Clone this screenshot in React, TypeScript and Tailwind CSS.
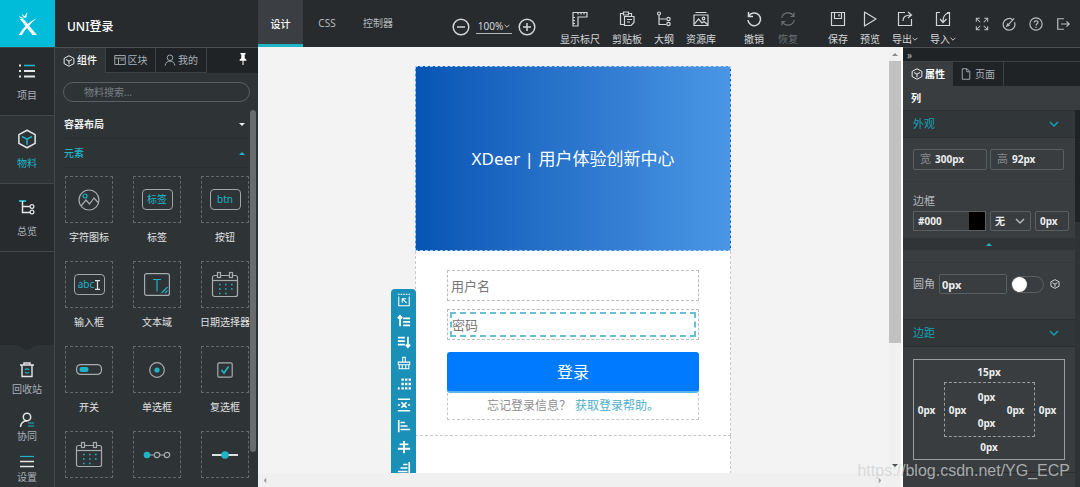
import type { ReactNode } from "react";

const CYAN = "#1fb3c6";

type SvgProps = { children: ReactNode; className?: string; box?: string };

function Svg({ children, className = "w-4 h-4", box = "0 0 16 16" }: SvgProps) {
  return (
    <svg viewBox={box} className={`shrink-0 ${className}`} fill="none" stroke="currentColor" strokeWidth="1.2" aria-hidden="true">
      {children}
    </svg>
  );
}

function CubeIcon({ className, accent = "currentColor" }: { className?: string; accent?: string }) {
  return (
    <Svg className={className}>
      <path d="M8 1 14.5 4.5v7L8 15 1.5 11.5v-7z" strokeLinejoin="round" />
      <path d="M4 6l4 2.2L12 6M8 8.2v4.3" stroke={accent} />
    </Svg>
  );
}

function Chevron({ className = "w-2 h-2" }: { className?: string }) {
  return (
    <Svg className={className} box="0 0 10 10">
      <path d="M1 3l4 4 4-4" strokeWidth="1.5" />
    </Svg>
  );
}

function Triangle({ className, up = false }: { className?: string; up?: boolean }) {
  return (
    <svg viewBox="0 0 8 4" className={`shrink-0 ${className}`} fill="currentColor" aria-hidden="true">
      <path d={up ? "M0 4 4 0l4 4z" : "M0 0h8L4 4z"} />
    </svg>
  );
}

function CalendarIcon() {
  return (
    <Svg className="w-7 h-7" box="0 0 28 28">
      <rect x="1.5" y="4.5" width="25" height="21" rx="2" />
      <path d="M1.5 9.5h25" />
      <rect x="6.5" y="1.5" width="3" height="5" fill="#2e3336" />
      <rect x="18.5" y="1.5" width="3" height="5" fill="#2e3336" />
      <path d="M8 13.5h14M8 18h14M8 22.5h9" stroke={CYAN} strokeWidth="1.6" strokeDasharray="1.6 4.4" />
    </Svg>
  );
}

const railTop = [
  {
    label: "项目",
    active: false,
    icon: (
      <Svg className="w-4 h-4">
        <path d="M5 2.5h11" stroke={CYAN} strokeWidth="1.6" />
        <path d="M5 8h11M5 13.5h11M0 2.5h2M0 8h2M0 13.5h2" strokeWidth="1.8" />
      </Svg>
    ),
  },
  { label: "物料", active: true, icon: <CubeIcon className="w-5 h-5" accent={CYAN} /> },
  {
    label: "总览",
    active: false,
    icon: (
      <Svg className="w-4 h-4">
        <path d="M0 2h7" stroke={CYAN} strokeWidth="2" />
        <path d="M3.5 2v11.5H11M3.5 7.5H11" strokeWidth="1.5" />
        <circle cx="13" cy="7.5" r="1.9" />
        <circle cx="13" cy="13" r="1.9" />
      </Svg>
    ),
  },
];

const railBottom = [
  {
    label: "回收站",
    size: "h-[50px] gap-[3px]",
    icon: (
      <Svg className="w-4 h-4">
        <path d="M1 3h14M5 3V1h6v2M3 3v11.5h10V3" strokeWidth="1.4" />
        <path d="M6 8a2.3 2.3 0 0 1 4 0M10 10a2.3 2.3 0 0 1-4 0" stroke={CYAN} />
      </Svg>
    ),
  },
  {
    label: "协同",
    size: "h-[41px]",
    icon: (
      <Svg className="w-4 h-4">
        <circle cx="8" cy="5" r="3.7" strokeWidth="1.5" />
        <path d="M1.5 15c.3-3.5 2.5-6 6.5-6.2" strokeWidth="1.5" />
        <path d="M9 11h6M9 14h6" stroke={CYAN} />
      </Svg>
    ),
  },
  {
    label: "设置",
    size: "h-9",
    icon: (
      <Svg className="w-4 h-4">
        <path d="M1 3.5h14" stroke={CYAN} />
        <path d="M1 8.5h14M1 13.5h14" strokeWidth="1.5" />
      </Svg>
    ),
  },
];

function Framed({ children, className }: { children: ReactNode; className: string }) {
  return (
    <span className={`flex h-[21px] items-center justify-center rounded-sm border border-[#a3a6a8] text-[#1fb3c6] ${className}`}>
      {children}
    </span>
  );
}

const elements = [
  {
    label: "字符图标",
    icon: (
      <Svg className="w-[22px] h-[22px]" box="0 0 22 22">
        <circle cx="11" cy="11" r="10" />
        <path d="M3 17l5-6 3.5 4 4.5-6 4.5 5" />
        <circle cx="7" cy="7" r="2" stroke={CYAN} />
      </Svg>
    ),
  },
  { label: "标签", icon: <Framed className="w-[31px] text-[10px]">标签</Framed> },
  { label: "按钮", icon: <Framed className="w-[31px] text-[10px]">btn</Framed> },
  {
    label: "输入框",
    icon: (
      <Framed className="w-[31px] text-[10px]">
        abc
        <Svg className="ml-px w-[5px] h-2.5 text-[#dfe2e3]" box="0 0 5 10">
          <path d="M0 .6h5M0 9.4h5M2.500 0v10" />
        </Svg>
      </Framed>
    ),
  },
  {
    label: "文本域",
    icon: (
      <Svg className="w-[26px] h-[23px]" box="0 0 26 23">
        <rect x=".6" y=".6" width="24.8" height="21.8" rx="2" />
        <path d="M9 6.500h8M13 6.500v12M17.500 20l6-6M21 20l2.500-2.500" stroke={CYAN} />
      </Svg>
    ),
  },
  { label: "日期选择器", icon: <CalendarIcon /> },
  {
    label: "开关",
    icon: (
      <Svg className="w-[26px] h-[11px]" box="0 0 26 11">
        <rect x=".6" y=".6" width="24.8" height="9.8" rx="4" />
        <rect x="3.500" y="3" width="9" height="5" rx="2" fill={CYAN} stroke="none" />
      </Svg>
    ),
  },
  {
    label: "单选框",
    icon: (
      <Svg className="w-4 h-4">
        <circle cx="8" cy="8" r="7.3" />
        <circle cx="8" cy="8" r="2.6" fill={CYAN} stroke="none" />
      </Svg>
    ),
  },
  {
    label: "复选框",
    icon: (
      <Svg className="w-4 h-4">
        <rect x=".8" y=".8" width="14.4" height="14.4" rx="1.5" />
        <path d="M4.500 8l2.500 3 4.500-6.500" stroke={CYAN} strokeWidth="1.7" />
      </Svg>
    ),
  },
];

// icon-only tiles at the end of the list
const moreElements = [
  { label: "日历", icon: <CalendarIcon /> },
  {
    label: "步骤条",
    icon: (
      <Svg className="w-7 h-2" box="0 0 28 8">
        <path d="M6 4h5M17 4h4" />
        <circle cx="4" cy="4" r="3.3" fill={CYAN} stroke="none" />
        <circle cx="14" cy="4" r="2.7" />
        <circle cx="24" cy="4" r="2.7" />
      </Svg>
    ),
  },
  {
    label: "滑块",
    icon: (
      <Svg className="w-[26px] h-2" box="0 0 26 8">
        <path d="M0 4h26" stroke="#fff" strokeWidth="1.7" />
        <circle cx="13" cy="4" r="3.8" fill={CYAN} stroke="none" />
      </Svg>
    ),
  },
];

const viewTools = [
  {
    label: "显示标尺",
    icon: <path d="M1 1.5h14v4.5H6V15H1zM6 1.5v2M9 1.5v2M12 1.5v2M1 6.5h2M1 9.5h2M1 12.5h2" />,
  },
  {
    label: "剪贴板",
    icon: (
      <>
        <path d="M5.500 13.500h-4v-11h3M9.500 2.500h3v3" />
        <path d="M4.500 1h5v3h-5z" />
        <path d="M5.500 5.500h9.500v6l-3 3H5.500zM8 8.500h5M8 11h3" />
      </>
    ),
  },
  {
    label: "大纲",
    icon: (
      <>
        <path d="M3 4v9.500h7M3 8h7" />
        <circle cx="3" cy="2.500" r="1.500" />
        <circle cx="12.500" cy="8" r="1.700" />
        <circle cx="12.500" cy="13" r="1.700" />
      </>
    ),
  },
  {
    label: "资源库",
    icon: (
      <>
        <path d="M2.500 1.500h11M1 4h14v10.500H1zM1.500 13l4-5 3.500 4 2-1.500 3.500 3" />
        <circle cx="10.500" cy="7.500" r="1.300" />
      </>
    ),
  },
];

const historyTools = [
  { label: "撤销", muted: false, icon: <path d="M2.500 1v4.500H7M2.700 5.200A6.300 6.300 0 1 1 1.900 9" strokeWidth="1.500" /> },
  {
    label: "恢复",
    muted: true,
    icon: <path d="M1.700 7A6.400 6.400 0 0 1 13.500 5M14.300 9A6.400 6.400 0 0 1 2.500 11M14 1.500V5.500H10.500M2 14.500v-4h3.500" />,
  },
];

const fileTools = [
  { label: "保存", menu: false, icon: <path d="M1.500 1.500h13v13h-13zM4.500 1.500v6h7v-6M9 3v2.500" /> },
  { label: "预览", menu: false, icon: <path d="M2.500 1 14 8 2.500 15z" strokeLinejoin="round" /> },
  { label: "导出", menu: true, icon: <path d="M8 1.500H1.500v13h13V8M6 10c0-4 2-6 8-6M11 1l3.500 3L11 7" /> },
  { label: "导入", menu: true, icon: <path d="M5 1.500H1.500v13h13v-13H12M14 2C9.500 2.500 8 5 8 10.500M5 8l3 3.500L11.500 8" /> },
];

const headerIcons = [
  {
    label: "全屏",
    icon: <path d="M1.500 5.500v-4h4M10.500 1.500h4v4M14.500 10.500v4h-4M5.500 14.500h-4v-4M2 2l4 4M14 2l-4 4M14 14l-4-4M2 14l4-4" />,
  },
  { label: "主题", icon: <path d="M12 3A6.700 6.700 0 1 0 14.300 6M7 9l7-7.500M5.500 10.500l1-2.500 1.500 1.500z" strokeWidth="1.400" /> },
  {
    label: "帮助",
    icon: (
      <>
        <circle cx="8" cy="8" r="7" strokeWidth="1.400" />
        <path d="M5.800 6.300C6 3.500 10.500 3.800 10.200 6.300 10 7.700 8 7.700 8 9.800M8 11v1.500" strokeWidth="1.400" />
      </>
    ),
  },
  { label: "退出", icon: <path d="M9 2H2v12h7M6 8h9M12 5l3 3-3 3" strokeWidth="1.400" /> },
];

const canvasTools = [
  {
    label: "选择父级",
    icon: (
      <>
        <path d="M2 4v10.500h12V4" />
        <path d="M1 1.500h14" strokeDasharray="2 1" />
        <path d="M6 11V6.500h4.500M6 6.500l5 5" />
      </>
    ),
  },
  { label: "前插", icon: <path d="M3.500 14V2M1 5l2.500-3L6 5M7 5h8M7 9h8M7 13h8" strokeWidth="2" /> },
  { label: "后插", icon: <path d="M12.500 2v12M10 11l2.500 3 2.500-3M1 3h8M1 7h8M1 11h8" strokeWidth="2" /> },
  { label: "清空", icon: <path d="M6.500 7V1.500h3V7M1.500 7h13v3h-13zM2.500 10v4.500h11V10M6 10v4.500M10 10v4.500" /> },
  { label: "网格", icon: <path d="M5 3h11M5 8h11M5 13h11M1 13h2" strokeWidth="2.600" strokeDasharray="2.800 1.300" /> },
  { label: "删除", icon: <path d="M1 1.500h14M1 14.500h14M5 5l6 6M11 5l-6 6M1 8h2.500M12.500 8H15" strokeWidth="1.700" /> },
  { label: "左对齐", icon: <path d="M2 1v14M4 4h5M4 8h8M4 12h11" strokeWidth="1.900" /> },
  { label: "居中对齐", icon: <path d="M8 1v14M3 5h10M1 10h14" strokeWidth="2.200" /> },
  { label: "右对齐", icon: <path d="M14 1v14M7 4h5M4 8h8M1 12h11" strokeWidth="1.900" /> },
];

function ToolButton({ label, icon, menu = false, muted = false }: { label: string; icon: ReactNode; menu?: boolean; muted?: boolean }) {
  return (
    <button type="button" className={`flex flex-col items-center gap-1 whitespace-nowrap ${muted ? "text-[#6c7073]" : "text-[#d3d6d8]"}`}>
      <Svg className="w-4 h-4">{icon}</Svg>
      <span className="flex items-center leading-4">
        {label}
        {menu && <Chevron className="w-1.5 h-1.5" />}
      </span>
    </button>
  );
}

function Header() {
  return (
    <header className="flex h-[47px] shrink-0 bg-[#272b2e]">
      <a href="#" aria-label="XDeer" className="flex w-[55px] shrink-0 items-center justify-center bg-[#00bcd9]">
        <svg viewBox="0 0 20 24" className="h-6 w-5 text-white" fill="currentColor" aria-hidden="true">
          <path d="M2 7c2-.4 3.600 0 4.800 1.500L19 23h-4.500z" />
          <path d="M18.500 6.500C11.500 9 5 16 .8 23h3C7.500 17 12.500 11.500 18.500 6.500z" />
          <path d="M4 1c.2 1.600 1 2.300 2.800 3.200C7 2.700 8 1.500 9.500.5 8.700 2.500 8.600 3.800 8.300 5.800 5.500 5.800 3.800 4 4 1zM.8 3.500c1.500 1.500 3.700 2.500 6.200 2.200C4.800 7.300 1.500 6.500.8 3.500z" />
        </svg>
      </a>
      <h1 className="flex w-[203px] shrink-0 items-center pl-3 pt-1.5 text-xs font-medium text-white">UNI登录</h1>
      <nav className="flex shrink-0 text-[#b4b8bb]">
        <a href="#design" className="flex w-[45px] items-center justify-center border-b-3 border-[#1fb3c6] bg-[#3b3f43] pt-1 font-medium text-white">设计</a>
        <a href="#css" className="flex w-12 items-center justify-center">CSS</a>
        <a href="#controller" className="flex w-[54px] items-center justify-center">控制器</a>
      </nav>
      <div className="ml-[47px] flex shrink-0 items-center gap-1.5 pt-1.5 text-[#d3d6d8]">
        <button type="button" aria-label="缩小">
          <Svg className="w-[18px] h-[18px]" box="0 0 18 18">
            <circle cx="9" cy="9" r="7.8" strokeWidth="1.5" />
            <path d="M5 9h8" strokeWidth="1.5" />
          </Svg>
        </button>
        <button type="button" className="flex w-9 items-center justify-center gap-px border-b border-[#b4b8bb] text-[10px] leading-[14px]">
          100%
          <Chevron className="w-1.5 h-1.5" />
        </button>
        <button type="button" aria-label="放大">
          <Svg className="w-[18px] h-[18px]" box="0 0 18 18">
            <circle cx="9" cy="9" r="7.8" strokeWidth="1.5" />
            <path d="M5 9h8M9 5v8" strokeWidth="1.5" />
          </Svg>
        </button>
      </div>
      <div className="ml-6 flex shrink-0 gap-3 pt-[11px]">
        {viewTools.map((tool) => (
          <ToolButton key={tool.label} {...tool} />
        ))}
      </div>
      <div className="ml-auto flex shrink-0 gap-3.5 pt-[11px]">
        {historyTools.map((tool) => (
          <ToolButton key={tool.label} {...tool} />
        ))}
      </div>
      <div className="ml-[30px] flex shrink-0 gap-3 pt-[11px]">
        {fileTools.map((tool) => (
          <ToolButton key={tool.label} {...tool} />
        ))}
      </div>
      <div className="ml-[19px] mr-2.5 flex shrink-0 items-center gap-[13px] text-[#b9bdc0]">
        {headerIcons.map((item) => (
          <button key={item.label} type="button" aria-label={item.label}>
            <Svg className="w-3.5 h-3.5">{item.icon}</Svg>
          </button>
        ))}
      </div>
    </header>
  );
}

function Rail() {
  return (
    <aside className="flex w-[55px] shrink-0 flex-col border-t border-r border-[#42474a] bg-[#272b2e] text-[#a9b0b8]">
      {railTop.map((item) => (
        <button
          key={item.label}
          type="button"
          className={`flex h-[68px] w-full shrink-0 flex-col items-center justify-center gap-1.5 border-b border-[#42474a] ${
            item.active ? "bg-[#2e3336] text-[#1fb3c6]" : ""
          }`}
        >
          <span className="flex h-5 items-center text-[#e3e5e6]">{item.icon}</span>
          <span className="leading-4">{item.label}</span>
        </button>
      ))}
      <div className="mt-auto flex flex-col bg-[#2e3336]">
        <svg viewBox="0 0 54 6" className="h-1.5 w-full" aria-hidden="true">
          <path d="M14 0c7 0 9 5 13 5s6-5 13-5z" fill="#272b2e" />
        </svg>
        <div className="flex flex-col pt-[9px]">
          {railBottom.map((item) => (
            <button key={item.label} type="button" className={`flex flex-col items-center justify-start ${item.size}`}>
              <span className="flex h-5 items-center text-[#e3e5e6]">{item.icon}</span>
              <span className="leading-3">{item.label}</span>
            </button>
          ))}
        </div>
      </div>
    </aside>
  );
}

function Tile({ children }: { children: ReactNode }) {
  return (
    <span className="flex h-[47px] w-12 items-center justify-center border border-dashed border-[#63686b] text-[#a9acae]">
      {children}
    </span>
  );
}

function LibraryPanel() {
  return (
    <aside className="flex w-[203px] shrink-0 flex-col overflow-hidden bg-[#2e3336]">
      <div className="flex h-[26px] shrink-0 border-t border-[#4a4f52] bg-[#1f2326] text-[#a9b0b8]">
        <button type="button" className="flex w-[50px] items-center justify-center gap-0.5 bg-[#2e3336] font-medium text-white">
          <CubeIcon className="w-3 h-3" />
          组件
        </button>
        <button type="button" className="flex w-[51px] items-center justify-center gap-0.5 border-x border-b border-[#3c4144]">
          <Svg className="w-3 h-3">
            <path d="M1 2h14v12H1zM1 5.5h14M6 5.5V14M8.5 8h5" />
          </Svg>
          区块
        </button>
        <button type="button" className="flex w-[51px] items-center justify-center gap-0.5 border-r border-b border-[#3c4144]">
          <Svg className="w-3 h-3">
            <circle cx="8" cy="5" r="3.7" />
            <path d="M1.500 15.500c.5-4 3-6 6.500-6s6 2 6.500 6" />
          </Svg>
          我的
        </button>
        <button type="button" aria-label="固定" className="ml-auto mr-2.5 pb-1 text-white">
          <svg viewBox="0 0 10 14" className="h-3 w-2.5" fill="currentColor" aria-hidden="true">
            <path d="M2 0h6v1.500H7V6l2 2v1H5.600v5H4.400V9H1V8l2-2V1.500H2z" />
          </svg>
        </button>
      </div>
      <div className="px-2 pt-[9px]">
        <input
          type="search"
          aria-label="物料搜索"
          placeholder="物料搜索..."
          className="h-5 w-full rounded-full border border-[#5a5f62] bg-transparent px-5 text-[10px] text-white outline-none placeholder:text-[#7b8084]"
        />
      </div>
      <div className="flex min-h-0 flex-1 gap-px overflow-hidden pt-2">
        <div className="w-[194px] pl-2">
          <button type="button" className="flex h-[29px] w-full items-center justify-between border-b border-[#292e30] pl-px pr-1 font-bold text-[#eceeef]">
            容器布局
            <Triangle className="h-[3px] w-1.5" />
          </button>
          <button type="button" className="flex h-[29px] w-full items-center justify-between border-b border-[#292e30] pl-px pr-1 font-medium text-[#1fb3c6]">
            元素
            <Triangle up className="h-[3px] w-1.5" />
          </button>
          <div className="grid grid-cols-3 gap-x-5 gap-y-4 pl-0.5 pt-2">
            {elements.map((item) => (
              <button key={item.label} type="button" className="flex w-12 flex-col items-center gap-1.5 whitespace-nowrap text-[#e0e2e3]">
                <Tile>{item.icon}</Tile>
                <span className="leading-4">{item.label}</span>
              </button>
            ))}
            {moreElements.map((item) => (
              <button key={item.label} type="button" aria-label={item.label} className="w-12">
                <Tile>{item.icon}</Tile>
              </button>
            ))}
          </div>
        </div>
        <div className="h-[342px] w-1.5 rounded-full bg-[#686c6e]" />
      </div>
    </aside>
  );
}

function PhonePage() {
  return (
    <div className="relative mx-auto h-full w-[316px] bg-white">
      <div className="flex h-[185px] items-center justify-center border border-dashed border-[#b4cdea] bg-linear-to-r from-[#0555b4] to-[#4a96e5] text-[17px] text-white">
        XDeer | 用户体验创新中心
      </div>
      <form className="h-[185px] border-x border-b border-dashed border-[#c8c8c8] px-[31px] pt-[19px]" onSubmit={(e) => e.preventDefault()}>
        <div className="h-[31px] border border-dashed border-[#bdbdbd] p-[3px]">
          <input
            type="text"
            aria-label="用户名"
            placeholder="用户名"
            className="block h-full w-full text-[13px] text-[#555] outline-none placeholder:text-[#777]"
          />
        </div>
        <div className="mt-2 h-[31px] border border-dashed border-[#bdbdbd] p-0.5">
          <input
            type="password"
            aria-label="密码"
            placeholder="密码"
            className="block h-full w-full border-2 border-dashed border-[#67bfd8] text-[13px] text-[#555] outline-none placeholder:text-[#777]"
          />
        </div>
        <button type="submit" className="mt-3 block h-[41px] w-full rounded-[3px] border-b-2 border-[#5bb4ee] bg-[#007bff] text-base text-white">
          登录
        </button>
        <p className="flex h-[27px] items-center justify-center gap-1 border-x border-b border-dashed border-[#c8c8c8] text-xs text-[#8f8f8f]">
          忘记登录信息？
          <a href="#help" className="text-[#4fb0cc]">获取登录帮助。</a>
        </p>
      </form>
      <div className="h-full border-x border-dashed border-[#c8c8c8]" />
      <div className="absolute top-[223px] left-[-24px] flex w-[25px] flex-col items-center gap-[7px] rounded-t-sm bg-[#1a8fb8] pt-1 pb-2 text-white">
        {canvasTools.map((tool) => (
          <button key={tool.label} type="button" aria-label={tool.label}>
            <Svg className="w-3.5 h-3.5">{tool.icon}</Svg>
          </button>
        ))}
      </div>
    </div>
  );
}

function Canvas() {
  return (
    <main className="flex min-w-0 flex-1 flex-col border-r-2 border-white bg-[#f3f3f3]">
      <div className="flex min-h-0 flex-1">
        <div className="min-w-0 flex-1 overflow-hidden pt-[19px] pr-px">
          <PhonePage />
        </div>
        <div className="flex w-3 shrink-0 flex-col items-center bg-[#f1f1f1] pt-1.5 pb-1.5">
          <Triangle up className="h-[3px] w-1.5 text-[#8a8a8a]" />
          <div className="mt-[5px] h-[282px] w-full bg-[#c1c1c1]" />
          <Triangle className="mt-auto h-[3px] w-1.5 text-[#505050]" />
        </div>
      </div>
      <div className="flex h-3.5 shrink-0 items-center justify-between bg-[#f0f0f0] pl-1 pr-[18px] text-[#a0a0a0]">
        <Triangle className="h-[3px] w-1.5 rotate-90" />
        <Triangle className="h-[3px] w-1.5 -rotate-90" />
      </div>
    </main>
  );
}

function SectionHeader({ children }: { children: ReactNode }) {
  return (
    <button type="button" className="flex h-7 w-full items-center justify-between border-y border-[#2a2e31] bg-[#313639] pl-2.5 pr-4 text-[11px] text-[#159fb2]">
      {children}
      <Chevron className="w-2.5 h-2.5" />
    </button>
  );
}

function SizeField({ label, value }: { label: string; value: string }) {
  return (
    <label className="flex h-[21px] w-[74px] items-center gap-1 rounded-xs border border-[#5a5f62] pl-1.5 text-[11px] text-[#85898c]">
      {label}
      <input defaultValue={value} className="w-10 text-[10px] font-bold text-[#eceeef] outline-none" />
    </label>
  );
}

function SpacingInput({ label, value = "0px" }: { label: string; value?: string }) {
  return <input aria-label={label} defaultValue={value} className="block h-4 w-[25px] text-center text-[10px] font-bold text-[#eceeef] outline-none" />;
}

function PropertyPanel() {
  return (
    <aside className="flex w-[177px] shrink-0 flex-col overflow-hidden bg-[#393d40] text-[#b4b8bb]">
      <button type="button" aria-label="收起" className="h-3.5 shrink-0 border-t border-[#4a4f52] bg-[#1f2326] pl-1 text-left leading-3">
        »
      </button>
      <div className="flex h-[25px] shrink-0 border-t border-[#3c4144] bg-[#1f2326]">
        <button type="button" className="flex w-[50px] items-center justify-center gap-0.5 bg-[#393d40] font-bold text-white">
          <CubeIcon className="w-3 h-3" />
          属性
        </button>
        <button type="button" className="flex w-[51px] items-center justify-center gap-1 border-r border-[#3c4144] text-[#a9b0b8]">
          <Svg className="w-2.5 h-3" box="0 0 12 16">
            <path d="M1 1h6.5L11 4.5V15H1zM7 1v4h4" />
          </Svg>
          页面
        </button>
      </div>
      <h2 className="h-6 shrink-0 pl-2 font-bold leading-6 text-white">列</h2>
      <div className="flex min-h-0 flex-1">
        <div className="min-w-0 flex-1 overflow-hidden">
          <SectionHeader>外观</SectionHeader>
          <div className="flex h-11 items-center gap-[3px] border-b border-[#34383b] pl-2.5">
            <SizeField label="宽" value="300px" />
            <SizeField label="高" value="92px" />
          </div>
          <div className="h-14 pl-2.5 pt-2.5">
            <label htmlFor="border-color" className="block text-[11px] leading-[18px]">边框</label>
            <div className="mt-px flex gap-1">
              <div className="flex h-5 w-[73px] border border-[#5a5f62]">
                <input id="border-color" defaultValue="#000" className="min-w-0 flex-1 pl-1 text-[10px] font-bold text-[#eceeef] outline-none" />
                <span className="w-4 bg-black" />
              </div>
              <div className="relative">
                <select aria-label="边框样式" className="h-5 w-[41px] appearance-none rounded-xs border border-[#5a5f62] pl-1 text-[10px] font-bold text-[#eceeef]">
                  <option>无</option>
                </select>
                <Chevron className="pointer-events-none absolute top-[5px] right-1.5 h-2.5 w-2.5" />
              </div>
              <input aria-label="边框宽度" defaultValue="0px" className="h-5 w-[34px] rounded-xs border border-[#5a5f62] pl-1 text-[10px] font-bold text-[#eceeef] outline-none" />
            </div>
          </div>
          <button type="button" aria-label="收起边框" className="flex h-3 w-full items-center justify-center bg-[#303437] text-[#1fb3c6]">
            <Triangle up className="h-[3px] w-1.5" />
          </button>
          <div className="mt-3 flex h-[43px] items-center border-t border-[#34383b] pl-2.5">
            <label htmlFor="radius" className="mr-1 text-[11px]">圆角</label>
            <input id="radius" defaultValue="0px" className="h-5 w-[68px] rounded-xs border border-[#5a5f62] pl-0.5 text-[11px] font-bold text-[#eceeef] outline-none" />
            <input
              type="checkbox"
              aria-label="独立圆角"
              className="ml-1 h-[17px] w-[33px] appearance-none rounded-full border border-[#5a5f62] before:block before:h-[15px] before:w-[15px] before:rounded-full before:bg-white"
            />
            <CubeIcon className="ml-1.5 w-2.5 h-2.5 text-white" />
          </div>
          <div className="mt-3.5">
            <SectionHeader>边距</SectionHeader>
          </div>
          <div className="border-b border-[#2a2e31] py-3 pl-2.5 pr-2.5">
            <div className="flex h-[101px] w-[152px] flex-col items-center justify-between border border-[#9a9ea0] py-1">
              <SpacingInput label="上外边距" value="15px" />
              <div className="flex w-full items-center">
                <SpacingInput label="左外边距" />
                <div className="ml-[5px] flex h-[55px] w-[91px] items-center justify-between border border-dashed border-[#9a9ea0] pr-1.5">
                  <SpacingInput label="左内边距" />
                  <div className="flex flex-col gap-2.5">
                    <SpacingInput label="上内边距" />
                    <SpacingInput label="下内边距" />
                  </div>
                  <SpacingInput label="右内边距" />
                </div>
                <SpacingInput label="右外边距" />
              </div>
              <SpacingInput label="下外边距" />
            </div>
          </div>
        </div>
        <div className="w-[5px] shrink-0 bg-[#2f3336]">
          <div className="h-28 bg-[#1f2326]" />
        </div>
      </div>
    </aside>
  );
}

export default function App() {
  return (
    <div className="relative flex h-screen flex-col overflow-hidden bg-[#272b2e] font-['Noto_Sans','Noto_Sans_CJK_SC',sans-serif] text-[10px]">
      <Header />
      <div className="flex min-h-0 flex-1">
        <Rail />
        <LibraryPanel />
        <Canvas />
        <PropertyPanel />
      </div>
      <p className="pointer-events-none absolute right-2.5 bottom-1 font-['Liberation_Sans',sans-serif] text-base text-[#cfd1d2]/75">
        https://blog.csdn.net/YG_ECP
      </p>
    </div>
  );
}
